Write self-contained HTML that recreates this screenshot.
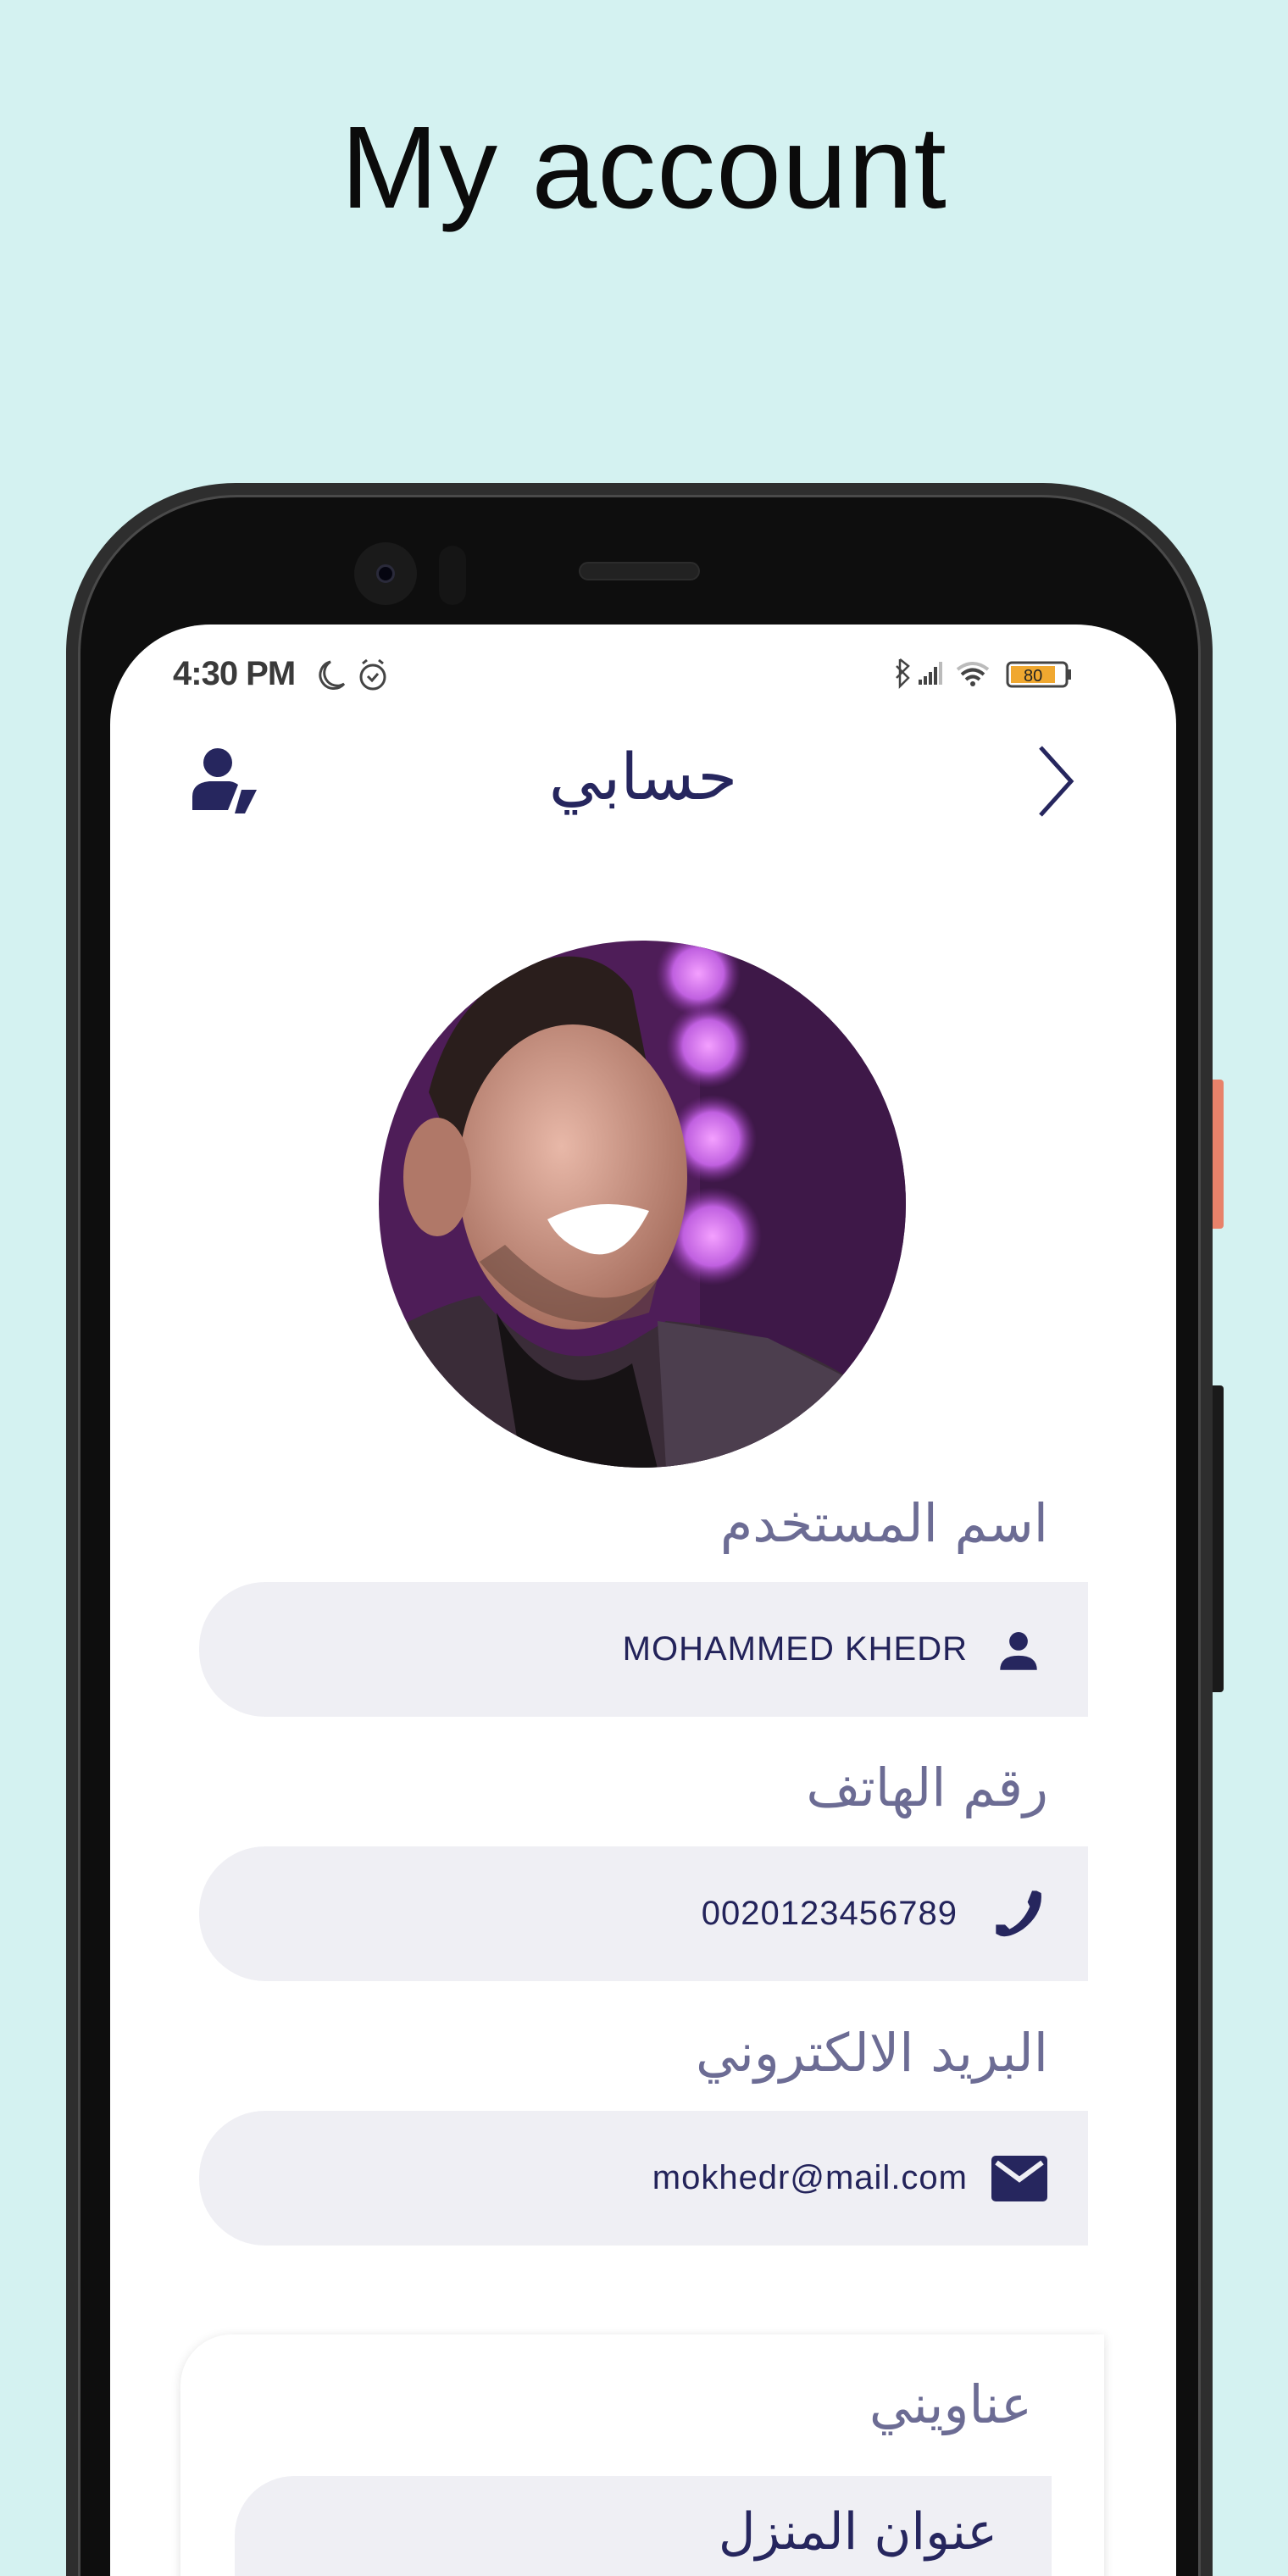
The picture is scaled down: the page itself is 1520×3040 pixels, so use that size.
<!DOCTYPE html>
<html><head><meta charset="utf-8">
<style>
*{margin:0;padding:0;box-sizing:border-box}
html{width:1520px;height:3040px;overflow:hidden}
body{width:1520px;height:3040px;background:#d4f2f1;position:relative;overflow:hidden;font-family:"Liberation Sans","Noto Sans CJK SC",sans-serif}
.abs{position:absolute}
.title{left:0;width:1520px;top:118px;text-align:center;font-size:138px;font-weight:500;color:#0b0b0b;letter-spacing:1px;line-height:160px}
.body{left:78px;top:570px;width:1353px;height:2470px;border-radius:200px 200px 0 0;background:#2e2e2e}
.body2{left:92px;top:584px;width:1325px;height:2456px;border-radius:188px 188px 0 0;background:#0e0e0e;border:3px solid #4a4a4a;border-bottom:none}
.screen{left:130px;top:737px;width:1258px;height:2303px;border-radius:118px 118px 0 0;background:#fff;overflow:hidden}
.lbl{font-family:"DejaVu Sans",sans-serif;color:#6c6c94;font-size:62px;direction:rtl;text-align:right}
.field{left:105px;width:1049px;height:159px;background:#efeff4;border-radius:78px 0 0 78px}
.ftxt{color:#23235a;font-size:40px;letter-spacing:1px;line-height:159px;text-align:right}
</style></head><body>
<div class="abs title">My account</div>
<div class="abs" style="left:1425px;top:1274px;width:19px;height:176px;background:#e8826a;border-radius:0 4px 4px 0"></div>
<div class="abs" style="left:1425px;top:1635px;width:19px;height:362px;background:#1a1a1a;border-radius:0 4px 4px 0"></div>
<div class="abs body"></div>
<div class="abs body2"></div>
<!-- camera -->
<div class="abs" style="left:418px;top:640px;width:74px;height:74px;border-radius:50%;background:#1a1a1a"></div>
<div class="abs" style="left:444px;top:666px;width:22px;height:22px;border-radius:50%;background:#050510;border:3px solid #2a2a3a"></div>
<div class="abs" style="left:518px;top:644px;width:32px;height:70px;border-radius:16px;background:#151515"></div>
<div class="abs" style="left:683px;top:663px;width:143px;height:22px;border-radius:11px;background:#222;border:2px solid #2c2c2c"></div>

<div class="abs screen">
 <!-- status bar -->
 <div class="abs" style="left:74px;top:36px;font-size:40px;font-weight:bold;color:#3a3a3a;letter-spacing:-1px">4:30 PM</div>
 <svg class="abs" style="left:240px;top:38px" width="100" height="44" viewBox="0 0 100 44">
  <path d="M20 6 A16 16 0 1 0 36 32 A13 13 0 0 1 20 6Z" fill="none" stroke="#444" stroke-width="3"/>
  <circle cx="70" cy="24" r="14" fill="none" stroke="#444" stroke-width="3"/>
  <path d="M64 23 L69 28 L76 20" fill="none" stroke="#444" stroke-width="3"/>
  <path d="M58 8 L63 4 M82 8 L77 4" stroke="#444" stroke-width="3"/>
 </svg>
 <svg class="abs" style="left:920px;top:35px" width="280" height="46" viewBox="0 0 280 46">
  <path d="M12 6 L22 14 L8 28 M8 14 L22 28 L12 38 L12 6" fill="none" stroke="#444" stroke-width="2.5"/>
  <rect x="34" y="30" width="4" height="6" fill="#444"/><rect x="40" y="26" width="4" height="10" fill="#444"/><rect x="46" y="21" width="4" height="15" fill="#444"/><rect x="52" y="15" width="4" height="21" fill="#444"/><rect x="58" y="9" width="4" height="27" fill="#bbb"/>
  <path d="M80 18 Q98 4 116 18" fill="none" stroke="#bbb" stroke-width="4"/>
  <path d="M85 24 Q98 13 111 24" fill="none" stroke="#444" stroke-width="4"/>
  <path d="M90 30 Q98 23 106 30" fill="none" stroke="#444" stroke-width="4"/>
  <circle cx="98" cy="35" r="3" fill="#444"/>
  <rect x="139" y="10" width="70" height="28" rx="5" fill="none" stroke="#444" stroke-width="3"/>
  <rect x="143" y="14" width="52" height="20" fill="#f0a830"/>
  <rect x="210" y="18" width="4" height="12" fill="#444"/>
  <text x="158" y="32" font-size="20" font-family="Liberation Sans" fill="#222">80</text>
 </svg>
 <!-- header -->
 <svg class="abs" style="left:95px;top:145px" width="86" height="80" viewBox="0 0 86 80">
  <circle cx="32" cy="18" r="17" fill="#26265e"/>
  <path d="M2 74 L2 58 Q2 42 22 40 L46 40 Q52 41 56 44 L44 74Z" fill="#26265e"/>
  <path d="M60 50 L78 50 L64 78 L52 78Z" fill="#26265e"/>
 </svg>
 <div class="abs" style="left:0;width:1258px;top:135px;text-align:center;font-size:76px;color:#26265e;font-family:'DejaVu Sans',sans-serif">حسابي</div>
 <svg class="abs" style="left:1090px;top:140px" width="60" height="90" viewBox="0 0 60 90">
  <path d="M8 5 L44 45 L8 85" fill="none" stroke="#26265e" stroke-width="5"/>
 </svg>
 <!-- avatar -->
 <svg class="abs" style="left:316px;top:372px" width="624" height="624" viewBox="0 0 624 624">
  <defs>
   <clipPath id="c"><circle cx="312" cy="312" r="311"/></clipPath>
   <radialGradient id="g" cx="0.5" cy="0.5" r="0.5"><stop offset="0" stop-color="#f4a0ff"/><stop offset="0.6" stop-color="#c060e0"/><stop offset="1" stop-color="#7a2a90" stop-opacity="0"/></radialGradient>
   <radialGradient id="sk" cx="0.45" cy="0.4" r="0.6"><stop offset="0" stop-color="#e8b8a8"/><stop offset="1" stop-color="#a87060"/></radialGradient>
  </defs>
  <g clip-path="url(#c)">
   <rect width="624" height="624" fill="#4e1d58"/>
   <rect x="380" width="244" height="624" fill="#3e1848"/>
   <circle cx="378" cy="40" r="50" fill="url(#g)"/>
   <circle cx="390" cy="125" r="50" fill="url(#g)"/>
   <circle cx="395" cy="235" r="52" fill="url(#g)"/>
   <circle cx="395" cy="350" r="58" fill="url(#g)"/>
   <path d="M60 180 Q90 60 190 25 Q260 5 300 60 L320 160 L180 180 L110 300 Z" fill="#2a1e1c"/>
   <ellipse cx="230" cy="280" rx="135" ry="180" fill="url(#sk)"/>
   <ellipse cx="70" cy="280" rx="40" ry="70" fill="#b07868"/>
   <path d="M200 330 Q260 300 320 320 Q290 380 250 370 Q215 360 200 330Z" fill="#fff"/>
   <path d="M120 380 Q200 480 320 440 L330 400 Q250 460 150 360Z" fill="#6a4a40" opacity="0.6"/>
   <path d="M0 624 L0 470 Q70 430 120 420 Q200 520 290 480 L340 450 Q470 460 560 520 L624 624Z" fill="#3a2c38"/>
   <path d="M140 440 Q210 560 300 500 L330 624 L170 624Z" fill="#161214"/>
   <path d="M330 450 L460 470 L560 520 L600 624 L340 624Z" fill="#4c3e4e"/>
  </g>
 </svg>
 <!-- fields -->
 <div class="abs lbl" style="right:151px;top:1024px">اسم المستخدم</div>
 <div class="abs field" style="top:1130px"></div>
 <div class="abs ftxt" style="right:246px;top:1130px">MOHAMMED KHEDR</div>
 <svg class="abs" style="left:1043px;top:1183px" width="58" height="58" viewBox="0 0 24 24"><circle cx="12" cy="7" r="4.5" fill="#26265e"/><path d="M3 21 Q3 14 12 14 Q21 14 21 21Z" fill="#26265e"/></svg>

 <div class="abs lbl" style="right:151px;top:1336px">رقم الهاتف</div>
 <div class="abs field" style="top:1442px"></div>
 <div class="abs ftxt" style="right:258px;top:1442px">0020123456789</div>
 <svg class="abs" style="left:1040px;top:1489px" width="64" height="64" viewBox="0 0 24 24"><path d="M20 2 L22 3 Q23 12 14 19 Q8 23 4 22 L2 21 L2 17 L6 17 L8 19 Q14 16 17 9 L16 7 L18 2Z" fill="#26265e"/></svg>

 <div class="abs lbl" style="right:151px;top:1649px">البريد الالكتروني</div>
 <div class="abs field" style="top:1754px"></div>
 <div class="abs ftxt" style="right:246px;top:1754px">mokhedr@mail.com</div>
 <svg class="abs" style="left:1040px;top:1807px" width="66" height="54" viewBox="0 0 66 54"><rect x="0" y="0" width="66" height="54" rx="5" fill="#26265e"/><path d="M6 8 L33 28 L60 8" fill="none" stroke="#efeff4" stroke-width="6"/></svg>

 <!-- card -->
 <div class="abs" style="left:83px;top:2018px;width:1090px;height:400px;background:#fff;border-radius:60px 0 0 0;box-shadow:0 2px 12px rgba(0,0,0,0.12)"></div>
 <div class="abs lbl" style="right:170px;top:2064px">عناويني</div>
 <div class="abs" style="left:147px;top:2185px;width:964px;height:200px;background:#efeff4;border-radius:70px 0 0 0"></div>
 <div class="abs" style="right:211px;top:2216px;font-size:60px;color:#26265e;direction:rtl;font-family:'DejaVu Sans',sans-serif">عنوان المنزل</div>
</div>
</body></html>
